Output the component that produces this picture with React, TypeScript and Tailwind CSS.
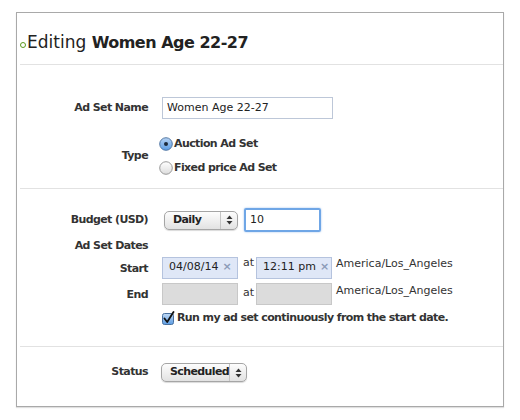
import React from 'react';

const font = { fontFamily: '"DejaVu Sans", "Liberation Sans", sans-serif' };

const Label = ({ children, className = '' }: { children: React.ReactNode; className?: string }) => (
  <div className={`w-[132px] shrink-0 pr-[1px] text-right text-[11px] font-bold tracking-[-0.6px] text-[#333] ${className}`}>{children}</div>
);

const Arrows = () => (
  <svg width="7" height="10" viewBox="0 0 7 10">
    <path d="M3.5 0.5 L6.5 4 L0.5 4 Z" fill="#333" />
    <path d="M3.5 9.5 L6.5 6 L0.5 6 Z" fill="#333" />
  </svg>
);

const MacSelect = ({ value, width }: { value: string; width: string }) => (
  <div
    className={`flex h-[19px] items-center rounded-[5px] border border-[#a5a5a5] bg-gradient-to-b from-[#fdfdfd] to-[#e2e2e2] text-[11px] font-bold tracking-[-0.6px] text-[#222] shadow-[0_1px_1px_rgba(0,0,0,0.15)] ${width}`}
  >
    <span className="flex-1 pl-[8px]">{value}</span>
    <span className="h-full w-px bg-[#c4c4c4]" />
    <span className="flex w-[16px] justify-center">
      <Arrows />
    </span>
  </div>
);

const Radio = ({ checked }: { checked?: boolean }) => (
  <svg width="14" height="14" viewBox="0 0 14 14">
    <defs>
      <linearGradient id="rsel" x1="0" y1="0" x2="0" y2="1">
        <stop offset="0" stopColor="#b7d3f3" />
        <stop offset="1" stopColor="#5c9de4" />
      </linearGradient>
      <linearGradient id="roff" x1="0" y1="0" x2="0" y2="1">
        <stop offset="0" stopColor="#ffffff" />
        <stop offset="1" stopColor="#dcdcdc" />
      </linearGradient>
    </defs>
    <circle cx="7" cy="7" r="6.3" fill={checked ? 'url(#rsel)' : 'url(#roff)'} stroke={checked ? '#4a6f9c' : '#8e8e8e'} strokeWidth="0.9" />
    {checked && <circle cx="7" cy="7" r="2" fill="#1c2a3a" />}
  </svg>
);

const Checkbox = () => (
  <svg width="13" height="14" viewBox="0 0 13 14">
    <defs>
      <linearGradient id="cb" x1="0" y1="0" x2="0" y2="1">
        <stop offset="0" stopColor="#c1daf5" />
        <stop offset="1" stopColor="#5b9be2" />
      </linearGradient>
    </defs>
    <rect x="0.5" y="2.5" width="11" height="11" rx="2" fill="url(#cb)" stroke="#48709f" />
    <path d="M2.5 7.5 L5.2 11 L11.5 1" fill="none" stroke="#111" strokeWidth="1.8" strokeLinecap="round" strokeLinejoin="round" />
  </svg>
);

const Token = ({ value, width }: { value: string; width: string }) => (
  <div className={`flex h-[22px] items-center border border-[#b5c3de] bg-[#dfe7f7] pl-[6px] text-[11px] text-[#222] ${width}`}>
    <span>{value}</span>
    <span className="ml-[4px] text-[11px] font-bold text-[#8c9bb8]">×</span>
  </div>
);

const EmptyBox = ({ width }: { width: string }) => (
  <div className={`h-[22px] border border-[#c8c8c8] bg-[#dcdcdc] ${width}`} />
);

export default function App() {
  return (
    <div className="h-[420px] w-[520px] bg-white pl-[16px] pt-[12px]" style={font}>
      <div className="flex h-[395px] w-[488px] flex-col border border-[#a9a9a9] bg-white shadow-[0_1px_1px_rgba(0,0,0,0.12)]">
        <div className="ml-[3px] flex h-[52px] items-end border-b border-[#e2e2e2] pb-[13px]">
          <span className="mb-[3px] mr-[1px] h-[6px] w-[6px] shrink-0 rounded-full border-[1.5px] border-[#5b9a1f]" />
          <span className="text-[17px] leading-none text-[#222]">
            Editing <span className="text-[16px] font-bold tracking-[-0.5px]">Women Age 22-27</span>
          </span>
        </div>

        <div className="ml-[3px] flex h-[124px] flex-col border-b border-[#e2e2e2] pt-[32px]">
          <div className="flex items-center">
            <Label className="-ml-[3px]">Ad Set Name</Label>
            <div className="ml-[13px] flex h-[22px] w-[171px] items-center border border-[#bdc7d8] pl-[4px] text-[11px] text-[#222]">
              Women Age 22-27
            </div>
          </div>
          <div className="mt-[18px] flex items-center">
            <Label className="-ml-[3px]">Type</Label>
            <div className="ml-[10px] flex flex-col gap-[10px]">
              <div className="flex h-[14px] items-center gap-[1px] text-[11px] font-bold tracking-[-0.6px] text-[#333]">
                <Radio checked />
                Auction Ad Set
              </div>
              <div className="flex h-[14px] items-center gap-[1px] text-[11px] font-bold tracking-[-0.6px] text-[#333]">
                <Radio />
                Fixed price Ad Set
              </div>
            </div>
          </div>
        </div>

        <div className="ml-[3px] flex h-[158px] flex-col border-b border-[#e2e2e2] pt-[19px]">
          <div className="flex items-center">
            <Label className="-ml-[3px]">Budget (USD)</Label>
            <div className="ml-[15px]">
              <MacSelect value="Daily" width="w-[74px]" />
            </div>
            <div className="ml-[6px] flex h-[24px] w-[77px] items-center rounded-[2px] border-2 border-[#6fa6e6] pl-[4px] text-[11px] text-[#222] shadow-[0_0_2px_rgba(80,140,220,0.6)]">
              10
            </div>
          </div>
          <div className="mt-[6px] flex">
            <Label className="-ml-[3px]">Ad Set Dates</Label>
          </div>
          <div className="mt-[2px] flex">
            <Label className="-ml-[3px] pt-[4px]">Start</Label>
            <div className="ml-[13px] flex text-[11px] text-[#333]">
              <Token value="04/08/14" width="w-[76px]" />
              <span className="w-[18px] pl-[5px] leading-[12px]">at</span>
              <Token value="12:11 pm" width="w-[76px]" />
              <span className="pl-[4px] leading-[14px]">America/Los_Angeles</span>
            </div>
          </div>
          <div className="mt-[4px] flex">
            <Label className="-ml-[3px] pt-[4px]">End</Label>
            <div className="ml-[13px] flex text-[11px] text-[#333]">
              <EmptyBox width="w-[76px]" />
              <span className="w-[18px] pl-[5px] pt-[4px] leading-[12px]">at</span>
              <EmptyBox width="w-[76px]" />
              <span className="pl-[4px] pt-[1px] leading-[14px]">America/Los_Angeles</span>
            </div>
          </div>
          <div className="ml-[142px] mt-[5px] flex items-center gap-[2px] text-[11px] font-bold tracking-[-0.6px] text-[#333]">
            <Checkbox />
            Run my ad set continuously from the start date.
          </div>
        </div>

        <div className="ml-[3px] flex flex-1 flex-col pt-[16px]">
          <div className="flex items-center">
            <Label className="-ml-[3px]">Status</Label>
            <div className="ml-[12px]">
              <MacSelect value="Scheduled" width="w-[86px]" />
            </div>
          </div>
        </div>
      </div>
    </div>
  );
}
